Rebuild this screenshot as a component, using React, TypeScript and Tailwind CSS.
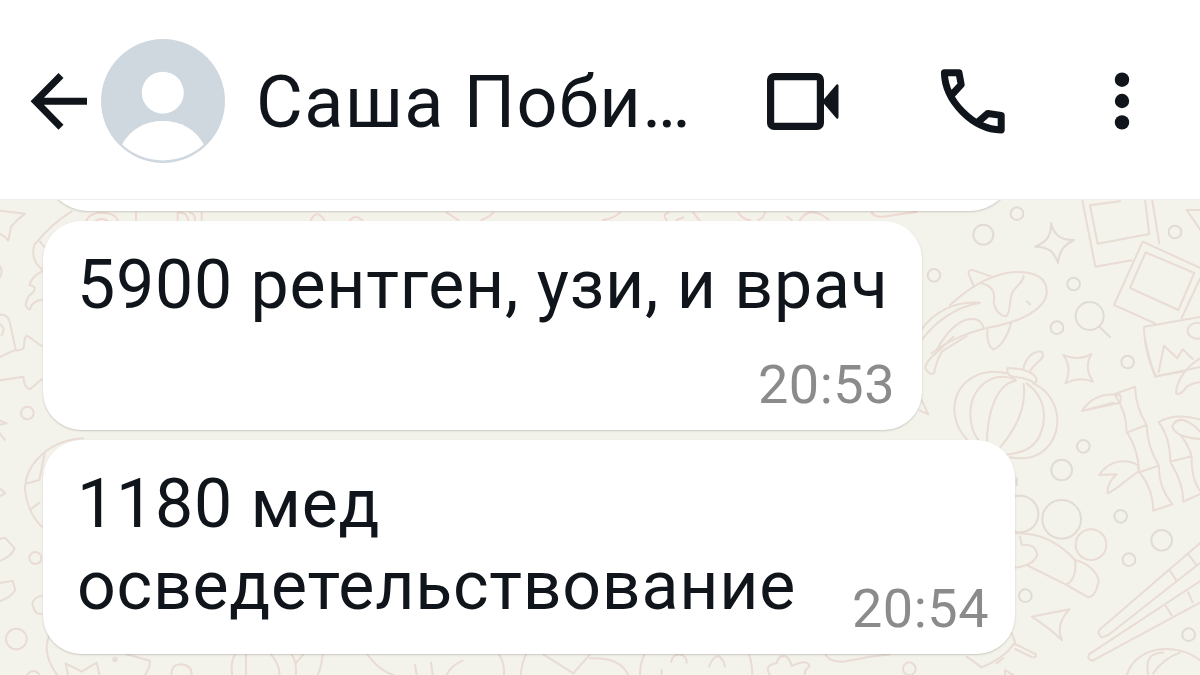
import { ReactNode } from "react";

type Message = {
  id: number;
  lines: string[];
  time: string;
  size: string;
  timeStyle: string;
};

const messages: Message[] = [
  {
    id: 1,
    lines: ["5900 рентген, узи, и врач"],
    time: "20:53",
    size: "w-[879px] h-[209px] flex-col",
    timeStyle: "self-end mr-[27px] mt-auto mb-[15px]",
  },
  {
    id: 2,
    lines: ["1180 мед", "осведетельствование"],
    time: "20:54",
    size: "w-[972px] h-[214px] justify-between",
    timeStyle: "self-end mr-[26px] mb-[15px]",
  },
];

function BackIcon() {
  return (
    <svg className="w-[60px] h-[60px] shrink-0" viewBox="29 71 60 60" fill="none" stroke="#10151b" strokeWidth="7">
      <path d="M61 75.500L35.500 101.300L61 127.200M35 101.300H87" />
    </svg>
  );
}

function Avatar() {
  return (
    <svg className="w-[126px] h-[126px] shrink-0" viewBox="100.500 38 126 126">
      <circle cx="163.500" cy="101" r="62" fill="#cfd7df" />
      <circle cx="163.300" cy="92.700" r="21" fill="#fff" />
      <path d="M122.500 144.500C131 129 146 121 163.500 121S196 129 204.300 144.500A60.500 60.500 0 0 1 122.500 144.500Z" fill="#fff" />
    </svg>
  );
}

function VideoIcon() {
  return (
    <svg className="w-[76px] h-[60px] shrink-0" viewBox="765 71 76 60">
      <rect x="770.600" y="76.600" width="49.800" height="49.800" rx="3.500" fill="none" stroke="#10151b" strokeWidth="7.200" />
      <path d="M822 101.500L836.500 84.500Q838.500 83.500 838.500 86V117Q838.500 119.500 836.500 118.500Z" fill="#10151b" />
    </svg>
  );
}

function PhoneIcon() {
  return (
    <svg
      className="w-[68px] h-[68px] shrink-0"
      viewBox="939 67 68 68"
      fill="none"
      stroke="#10151b"
      strokeWidth="7"
      strokeLinejoin="round"
    >
      <path d="M952 94.500L961.200 84.700L959 72.800H944.400C945 101 973 129.500 1001.200 130V115.400L987.800 113.500L977.500 122.500" />
    </svg>
  );
}

function MenuIcon() {
  return (
    <svg className="w-4 h-[60px] shrink-0" viewBox="1113.700 71.300 16 60" fill="#10151b">
      <circle cx="1121.700" cy="80" r="7.200" />
      <circle cx="1121.700" cy="101.300" r="7.200" />
      <circle cx="1121.700" cy="122.700" r="7.200" />
    </svg>
  );
}

// each patch is drawn in units of a third of a pixel
function Patch({ at, children }: { at: string; children: ReactNode }) {
  return <g transform={`translate(${at}) scale(0.3333)`}>{children}</g>;
}

function Wallpaper() {
  return (
    <svg
      className="absolute inset-0 w-full h-full"
      viewBox="0 200 1200 475"
      fill="none"
      stroke="#e8dcd4"
      strokeWidth="6"
      strokeLinejoin="round"
      strokeLinecap="round"
    >
      <Patch at="900 190">
        <g stroke="#e2dbd3">
          <circle cx="351" cy="71" r="19" />
          <circle cx="250" cy="134" r="30" />
          <circle cx="102" cy="256" r="19" />
          <circle cx="521" cy="282" r="19" />
          <circle cx="471" cy="413" r="19" />
          <circle cx="825" cy="126" r="19" />
          <circle cx="569" cy="378" r="42" />
          <path d="M598 410L630 441" />
          <path d="M453 100C462 134 480 151 522 150C490 166 478 184 474 219C463 187 447 170 406 170C442 155 454 136 453 100Z" />
        </g>
        <path d="M545 20L586 230L695 211M755 20L778 160M734 20L748 132L593 161L570 46L660 34" />
        <path d="M728 155L642 345L765 400M728 155L910 238M845 384L905 255M737 187L883 249L835 360L690 294Z" />
        <path d="M905 380L733 410Q727 440 765 560L905 530M860 60L910 60M860 60L905 125" />
        <ellipse cx="892" cy="422" rx="29" ry="24" />
        <path d="M150 345C205 295 270 250 345 246C410 244 443 266 440 310C434 360 355 395 290 408C220 420 145 450 95 490" />
        <path d="M275 260L222 241Q202 236 207 255L222 290M245 280C285 290 285 315 281 340C290 370 305 379 319 379C335 361 325 325 340 302C360 280 371 270 371 258" />
        <path d="M60 425C100 365 165 332 240 338C165 352 110 390 65 450M110 480C150 405 195 380 230 389Q248 396 250 415M263 420C258 450 270 474 280 478C300 474 325 435 333 400M380 334L390 343" />
      </Patch>
      <Patch at="900 340">
        <path d="M200 -12L125 35Q105 75 103 98Q89 110 76 85Q77 65 105 42L160 -10M65 180L85 223L60 212" />
        <path d="M320 100C235 80 163 130 163 210C165 260 190 290 230 330M345 118C270 90 210 150 211 225C213 275 230 300 265 330M348 122C295 130 260 205 260 325M371 132C380 200 350 270 285 340M380 130C430 165 445 225 420 285C400 330 360 340 310 345M400 130C455 155 483 215 468 275C450 335 400 365 330 352" />
        <path d="M322 85Q318 110 350 112Q385 115 405 131Q418 115 395 100Q365 82 322 85ZM370 87C375 55 400 32 425 35C442 55 400 70 391 93" />
        <path d="M490 45Q530 65 575 42Q550 80 579 125Q540 108 496 130Q518 85 490 45Z" />
        <g stroke="#e2dbd3">
          <circle cx="683" cy="66" r="19" />
          <circle cx="550" cy="319" r="19" />
          <circle cx="485" cy="390" r="31" />
          <circle cx="360" cy="522" r="55" />
          <path d="M350 415V435" />
        </g>
        <path d="M735 0Q745 70 768 108L855 94M776 96L792 17L832 55L848 28L878 57M905 52C865 75 830 115 828 160Q842 168 860 140Q878 128 905 126" />
        <path d="M645 162L706 140Q704 195 740 255L680 278Q680 215 645 165M546 213C570 175 610 158 660 165Q665 175 660 188L546 213L640 188M740 257Q742 320 777 377L717 397Q717 335 683 280M777 380Q775 440 817 493L760 512Q760 450 720 398" />
        <path d="M598 405C625 360 680 355 713 375L717 393C690 410 650 450 623 460Q620 430 650 403L598 405M776 247Q810 290 811 365L875 349Q868 320 843 287M776 247C810 225 860 227 905 240M905 297C860 295 825 285 817 260Q825 237 850 240Q880 250 905 280M875 350Q873 420 905 460L850 485Q850 430 813 370" />
      </Patch>
      <Patch at="960 500">
        <circle cx="393" cy="134" r="46" />
        <g stroke="#e2dbd3">
          <circle cx="305" cy="58" r="58" />
          <circle cx="482" cy="49" r="19" />
          <circle cx="605" cy="121" r="31" />
          <circle cx="507" cy="179" r="19" />
          <circle cx="196" cy="287" r="19" />
          <circle cx="686" cy="404" r="19" />
        </g>
        <path d="M160 100C240 95 300 130 345 180C350 215 340 245 318 254L200 195M345 180C390 190 425 230 413 255Q405 290 385 292L318 254M180 110L185 135Q225 130 232 162Q225 195 165 203" />
        <path d="M215 350L328 328Q285 375 306 421Q270 385 215 350Z" />
        <path d="M725 125L420 388Q410 400 425 412L445 405L725 185M628 209L648 240M685 162L708 194M725 240L387 463Q380 478 398 482L725 305M618 318L635 346M684 276L698 307" />
        <path d="M500 530C520 440 650 420 725 485M565 525C555 480 570 458 610 458M580 520Q610 475 660 458M20 470L65 502Q140 470 165 425L155 400M165 432L228 463Q230 474 215 471L165 447M110 490L130 475M135 525V510L160 525" />
      </Patch>
      <Patch at="0 190">
        <path d="M-5 62L75 71Q50 90 33 110L25 152Q15 138 -5 128M215 64C180 85 135 125 103 165C93 200 110 225 125 238M120 155L133 170M125 245Q95 260 88 285Q115 290 98 308Q80 320 77 345Q90 370 95 345Q110 330 125 330" />
        <path d="M-5 375Q25 370 30 400L47 478M-5 400Q20 412 5 435M-5 503L40 482Q70 482 72 470Q72 435 83 438L125 468M-5 572L70 560Q72 595 90 598L125 568M-5 225Q15 240 -5 270M-5 690L20 700L-5 705M-5 725L15 750" />
        <circle cx="82" cy="669" r="19" />
      </Patch>
      <Patch at="0 420">
        <path d="M250 55C150 60 75 130 75 210C80 255 100 295 125 320M135 95L118 180L82 190M118 248L92 268M-5 200L15 220L-5 232" />
        <path d="M-5 358L15 353L44 385Q35 410 -5 425M-5 490L38 482L46 510Q30 535 -5 545M125 527Q95 535 98 555Q105 585 125 582M148 645C130 685 145 730 175 770M205 770L197 730L245 755L290 728L300 770" />
        <circle cx="106" cy="414" r="18" />
        <circle cx="49" cy="657" r="31" />
        <circle cx="100" cy="773" r="20" />
        <circle cx="345" cy="718" r="5" />
      </Patch>
      <Patch at="100 640">
        <path d="M80 43L150 62Q150 85 135 105M215 105Q212 73 245 73Q277 78 275 105M405 43Q390 70 397 105M438 43V105M513 43Q540 75 538 105M575 43Q592 70 587 105M587 70L610 43M668 43Q665 80 653 105M802 43Q835 90 880 105M945 75L950 105M993 68L998 105M1040 105Q1055 75 1088 62M1197 43Q1215 70 1212 105M1278 43Q1265 70 1262 105M1330 43L1420 100L1470 43M1470 55Q1560 50 1585 105" />
      </Patch>
      <Patch at="550 640">
        <path d="M283 43Q270 70 270 105M363 66Q370 43 387 43Q410 45 410 68M477 80Q490 48 505 48Q520 55 525 80M597 43Q607 70 607 105M335 90V105M660 105Q640 75 680 70Q685 45 705 48Q720 55 725 78Q775 55 778 80Q762 90 765 105M827 43Q835 65 880 65Q950 50 1020 43" />
        <circle cx="1078" cy="86" r="19" />
      </Patch>
      <Patch at="60 190">
        <g stroke="#efd9d0">
          <path d="M80 90Q90 68 125 68Q165 68 173 90M108 92Q125 80 142 92M228 68V90M353 90V68Q380 65 385 90M390 68Q405 70 405 90M425 68V90M753 90Q770 55 793 90M870 90Q885 72 907 90M1160 68L1195 90M1265 90Q1290 80 1300 68" />
        </g>
      </Patch>
      <Patch at="600 190">
        <g stroke="#efd9d0">
          <path d="M10 90Q40 85 60 68M200 90Q185 75 205 68M230 90L250 82M280 68L298 90M415 68Q430 90 450 90M475 90Q490 85 495 68M562 80L575 90M600 90Q630 45 685 88M815 68Q825 82 850 80Q900 72 950 66" />
        </g>
      </Patch>
    </svg>
  );
}

function Bubble({ message }: { message: Message }) {
  return (
    <div className={`flex bg-white rounded-[38px] shadow-[0_1px_2px_rgba(60,55,40,0.22)] ${message.size}`}>
      <div className="pl-[34px] pt-[23px] text-[68px] leading-[82px] tracking-[0.75px] text-[#10151b] whitespace-nowrap">
        {message.lines.map((line) => (
          <p key={line}>{line}</p>
        ))}
      </div>
      <span className={`text-[54px] leading-[60px] tracking-[0.5px] text-[#8b8b8b] ${message.timeStyle}`}>
        {message.time}
      </span>
    </div>
  );
}

export default function App() {
  return (
    <div className="w-[1200px] h-[675px] flex flex-col overflow-hidden bg-white font-['Roboto',sans-serif]">
      <header className="h-[200px] shrink-0 flex items-start border-b border-[#eeeeec] bg-white">
        <div className="flex items-center h-[126px] mt-[38px] ml-[29px]">
          <BackIcon />
          <div className="ml-[11px]">
            <Avatar />
          </div>
          <h1 className="w-[508.500px] pl-[30px] pt-[3px] text-[72px] leading-[84px] tracking-[1.3px] font-normal text-[#10151b] whitespace-nowrap">
            Саша Поби…
          </h1>
        </div>
        <div className="flex items-center h-[126px] mt-[38px] ml-[30.5px]">
          <VideoIcon />
          <div className="ml-[98px]">
            <PhoneIcon />
          </div>
          <div className="ml-[106.7px]">
            <MenuIcon />
          </div>
        </div>
      </header>

      <main className="relative flex-1 overflow-hidden bg-[#f3f2eb]">
        <Wallpaper />
        <div className="relative flex flex-col gap-[10px] pl-[43px] -mt-[89px]">
          <div className="w-[972px] h-[100px] shrink-0 rounded-[46px] bg-white shadow-[0_1px_2px_rgba(60,55,40,0.22)]" />
          {messages.map((message) => (
            <Bubble key={message.id} message={message} />
          ))}
        </div>
      </main>
    </div>
  );
}
